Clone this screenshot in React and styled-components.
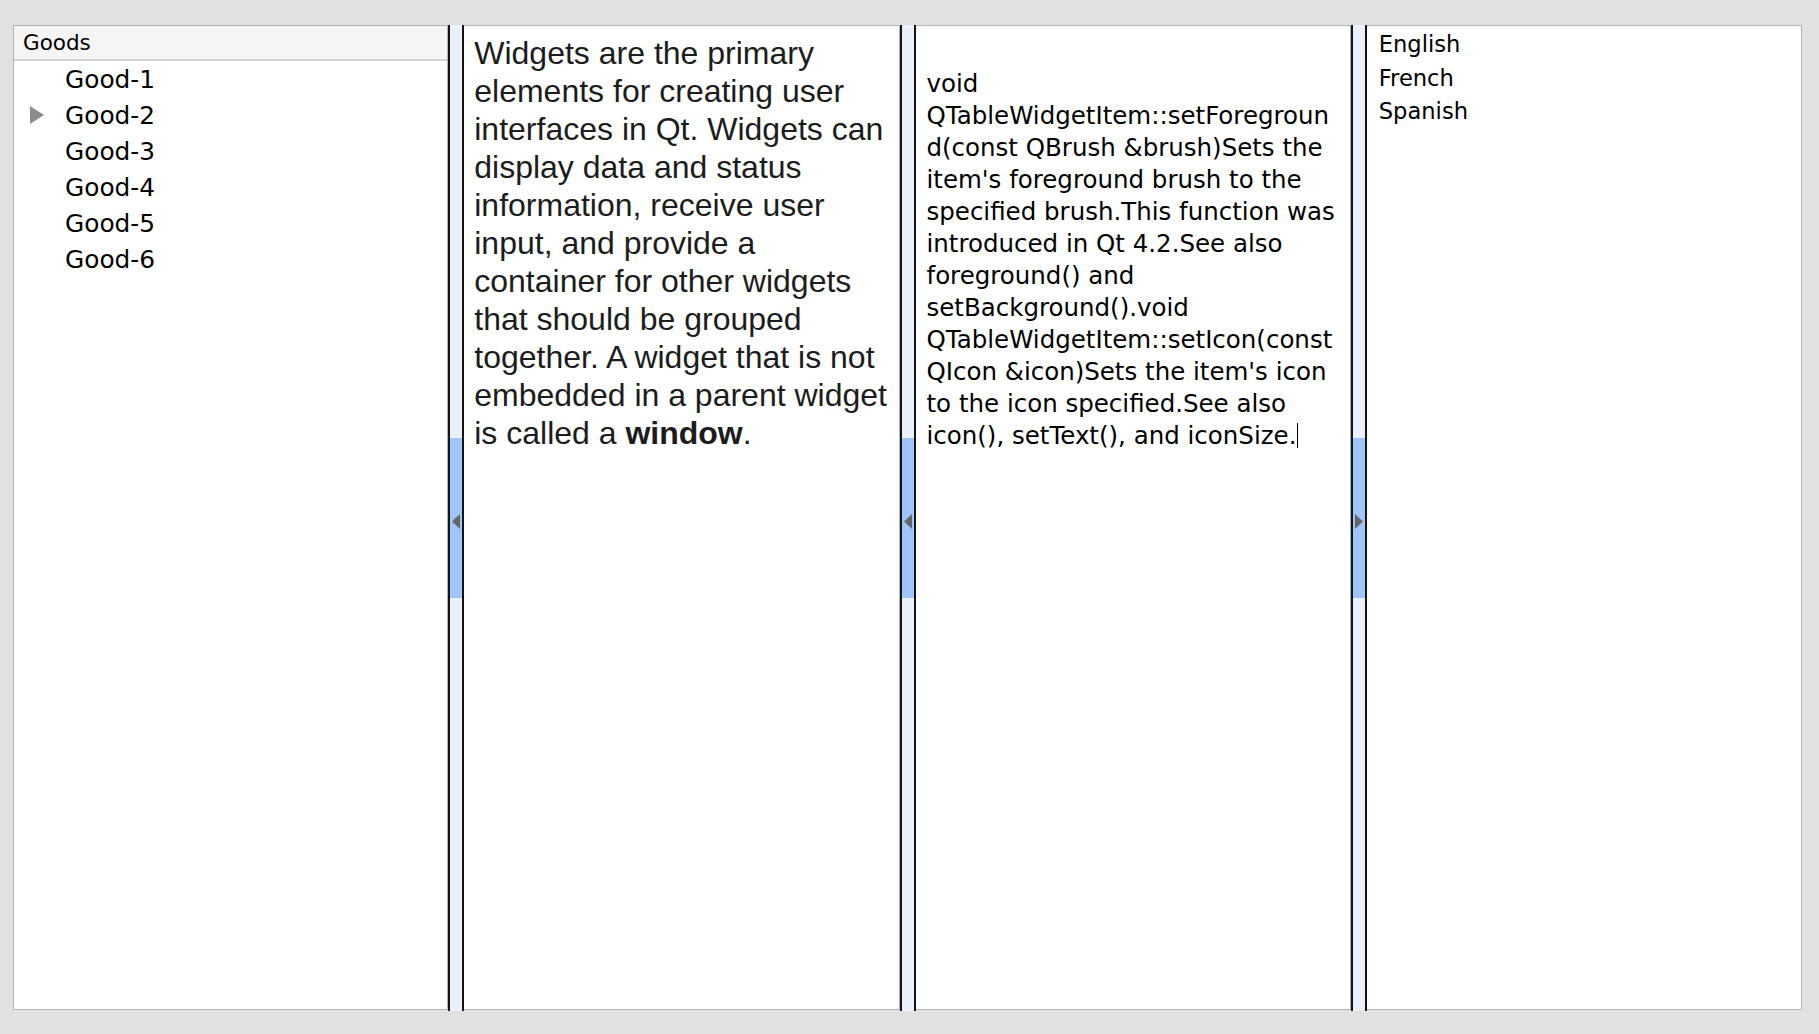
import React from 'react';
import styled, { createGlobalStyle } from 'styled-components';

const GlobalStyle = createGlobalStyle`
  html, body { margin: 0; padding: 0; background: #e1e1e1; }
  body { font-family: "DejaVu Sans", sans-serif; }
`;

const Window = styled.div`
  box-sizing: border-box;
  width: 100%;
  height: 100vh;
  padding: 25px 17px 24px 13px;
  background: #e1e1e1;
`;

const Splitter = styled.div`
  height: 100%;
  display: grid;
  grid-template-columns: minmax(0, 1fr) 16px minmax(0, 1fr) 16px minmax(0, 1fr) 16px minmax(0, 1fr);
`;

const Pane = styled.div`
  box-sizing: border-box;
  min-width: 0;
  background: #ffffff;
  border: 1px solid #b3b3b3;
  border-left: ${p => (p.$first ? '1px solid #b3b3b3' : 'none')};
  overflow: hidden;
`;

const Handle = styled.div`
  box-sizing: border-box;
  background: #eaf1fd;
  border-left: 2px solid #141414;
  border-right: 2px solid #141414;
  margin-bottom: -1px;
  display: flex;
  align-items: center;
  justify-content: center;
`;

const Grip = styled.div`
  width: 100%;
  height: 160px;
  background: #9ec6fa;
  display: flex;
  align-items: center;
  justify-content: center;
  padding-top: 6px;
  box-sizing: border-box;
`;

const TreeHeader = styled.div`
  height: 33px;
  border-bottom: 2px solid #d3d3d3;
  background: #f5f5f5;
  font-size: 21.5px;
  line-height: 34px;
  padding-left: 9px;
  color: #000;
`;

const TreeRow = styled.div`
  height: 36px;
  display: flex;
  align-items: center;
  font-size: 24.8px;
  color: #000;
`;

const Branch = styled.span`
  flex: none;
  width: 51px;
  box-sizing: border-box;
  padding-left: 16px;
  display: flex;
  align-items: center;
`;

const Doc = styled.div`
  font-family: "Liberation Sans", Arial, sans-serif;
  font-size: 32px;
  line-height: 38px;
  color: #1c1c1c;
  padding: 8px 9px 0 10px;
`;

const Code = styled.div`
  font-family: "DejaVu Sans", sans-serif;
  font-size: 24.5px;
  line-height: 32px;
  color: #000;
  padding: 42px 7px 0 11px;
  overflow-wrap: break-word;
  word-break: normal;
`;

const Caret = styled.span`
  display: inline-block;
  width: 0;
  height: 25px;
  border-left: 1.5px solid #000;
  vertical-align: -4px;
  margin-left: 1px;
`;

const LangList = styled.div`
  padding: 2px 10px 0 12px;
`;

const LangItem = styled.div`
  font-size: 22.6px;
  line-height: 33.5px;
  color: #000;
`;

const Arrow = ({ dir }) => (
  <svg width="8" height="15" viewBox="0 0 8 15">
    {dir === 'left' ? (
      <polygon points="8,0 8,15 0,7.5" fill="#666" />
    ) : (
      <polygon points="0,0 0,15 8,7.5" fill="#666" />
    )}
  </svg>
);

const SplitHandle = ({ dir }) => (
  <Handle>
    <Grip>
      <Arrow dir={dir} />
    </Grip>
  </Handle>
);

const goods = ['Good-1', 'Good-2', 'Good-3', 'Good-4', 'Good-5', 'Good-6'];

const codeText =
  "void QTableWidgetItem::setForeground(const QBrush &brush)Sets the item's foreground brush to the specified brush.This function was introduced in Qt 4.2.See also foreground() and setBackground().void QTableWidgetItem::setIcon(const QIcon &icon)Sets the item's icon to the icon specified.See also icon(), setText(), and iconSize.";

export default function App() {
  return (
    <>
      <GlobalStyle />
      <Window>
        <Splitter>
          <Pane $first>
            <TreeHeader>Goods</TreeHeader>
            {goods.map((g, i) => (
              <TreeRow key={g}>
                <Branch>
                  {i === 1 && (
                    <svg width="14" height="18" viewBox="0 0 14 18">
                      <polygon points="0,0 14,9 0,18" fill="#8c8c8c" />
                    </svg>
                  )}
                </Branch>
                <span>{g}</span>
              </TreeRow>
            ))}
          </Pane>
          <SplitHandle dir="left" />
          <Pane>
            <Doc>
              Widgets are the primary elements for creating user interfaces in Qt. Widgets can
              display data and status information, receive user input, and provide a container
              for other widgets that should be grouped together. A widget that is not embedded in
              a parent widget is called a <b>window</b>.
            </Doc>
          </Pane>
          <SplitHandle dir="left" />
          <Pane>
            <Code>
              {codeText}
              <Caret />
            </Code>
          </Pane>
          <SplitHandle dir="right" />
          <Pane>
            <LangList>
              <LangItem>English</LangItem>
              <LangItem>French</LangItem>
              <LangItem>Spanish</LangItem>
            </LangList>
          </Pane>
        </Splitter>
      </Window>
    </>
  );
}
